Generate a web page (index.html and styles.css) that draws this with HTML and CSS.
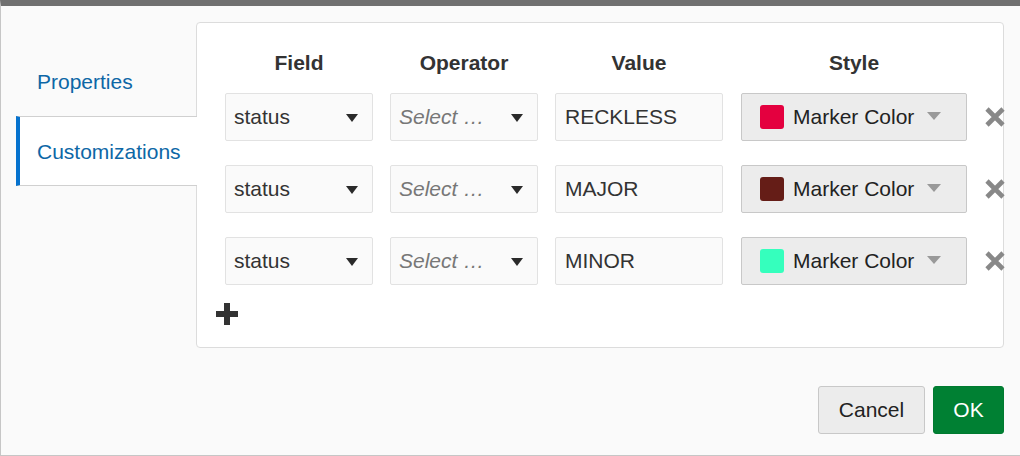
FILE: index.html
```html
<!DOCTYPE html>
<html>
<head>
<meta charset="utf-8">
<link rel="stylesheet" href="styles.css">
</head>
<body>
<div class="dialog">
  <div class="main">
    <div class="tabs">
      <div class="tab">Properties</div>
      <div class="tab active">Customizations</div>
    </div>
    <div class="panel">
      <div class="grid head">
        <div>Field</div>
        <div>Operator</div>
        <div>Value</div>
        <div>Style</div>
        <div></div>
      </div>
      <div class="grid rows">
        <div class="select"><span class="txt">status</span><span class="caret"></span></div>
        <div class="select"><span class="txt ph">Select …</span><span class="caret"></span></div>
        <div class="input">RECKLESS</div>
        <div class="style-btn"><span class="swatch sw-red"></span><span class="stxt">Marker Color</span><span class="caret gray"></span></div>
        <div class="remove"><svg width="22" height="22" viewBox="0 0 22 22"><path d="M3 3 L19 19 M19 3 L3 19" stroke="#888" stroke-width="4.6" fill="none"/></svg></div>

        <div class="select"><span class="txt">status</span><span class="caret"></span></div>
        <div class="select"><span class="txt ph">Select …</span><span class="caret"></span></div>
        <div class="input">MAJOR</div>
        <div class="style-btn"><span class="swatch sw-brown"></span><span class="stxt">Marker Color</span><span class="caret gray"></span></div>
        <div class="remove"><svg width="22" height="22" viewBox="0 0 22 22"><path d="M3 3 L19 19 M19 3 L3 19" stroke="#888" stroke-width="4.6" fill="none"/></svg></div>

        <div class="select"><span class="txt">status</span><span class="caret"></span></div>
        <div class="select"><span class="txt ph">Select …</span><span class="caret"></span></div>
        <div class="input">MINOR</div>
        <div class="style-btn"><span class="swatch sw-mint"></span><span class="stxt">Marker Color</span><span class="caret gray"></span></div>
        <div class="remove"><svg width="22" height="22" viewBox="0 0 22 22"><path d="M3 3 L19 19 M19 3 L3 19" stroke="#888" stroke-width="4.6" fill="none"/></svg></div>
      </div>
      <div class="add"><svg width="24" height="24" viewBox="0 0 24 24"><path d="M12 1 V23 M1 12 H23" stroke="#333" stroke-width="6" fill="none"/></svg></div>
    </div>
  </div>
  <div class="footer">
    <button class="btn cancel">Cancel</button>
    <button class="btn ok">OK</button>
  </div>
</div>
</body>
</html>
```
FILE: styles.css
```css
* { box-sizing: border-box; }
html, body { margin: 0; padding: 0; }
body {
  font-family: "Liberation Sans", Arial, sans-serif;
  font-size: 21px;
  color: #333;
  background: #fff;
}
.dialog {
  width: 1020px;
  height: 456px;
  background: #fafafa;
  border-top: 6px solid #707070;
  border-left: 1px solid #c6c6c6;
  border-bottom: 1px solid #c6c6c6;
  display: flex;
  flex-direction: column;
}
.main {
  display: flex;
  padding: 16px 16px 0 15px;
}
.tabs {
  width: 180px;
  flex: none;
  padding-top: 24px;
  display: flex;
  flex-direction: column;
}
.tab {
  height: 70px;
  display: flex;
  align-items: center;
  padding-left: 21px;
  padding-top: 2px;
  color: #0d67a6;
  line-height: 24px;
}
.tab.active {
  position: relative;
  z-index: 1;
  width: 181px;
  background: #fff;
  border-left: 4px solid #0572ce;
  border-top: 1px solid #d0d0d0;
  border-bottom: 1px solid #d0d0d0;
  padding-left: 17px;
}
.panel {
  flex: 1;
  min-width: 0;
  background: #fff;
  border: 1px solid #dcdcdc;
  border-radius: 4px;
  padding: 28px 0 21px 28px;
}
.grid {
  display: grid;
  grid-template-columns: 148px 148px 168px 227px 22px;
  column-gap: 17px;
}
.grid > :nth-child(5n+4) { margin-left: 1px; }
.head {
  font-weight: bold;
  text-align: center;
  line-height: 24px;
  margin-bottom: 18px;
}
.rows {
  row-gap: 24px;
  grid-auto-rows: 48px;
}
.select, .input {
  background: #fafafa;
  border: 1px solid #e2e2e2;
  border-radius: 2px;
  display: flex;
  align-items: center;
  padding: 0 14px 0 8px;
  color: #333;
}
.select .txt {
  flex: 1;
  white-space: nowrap;
  overflow: hidden;
}
.select .ph {
  font-style: italic;
  color: #777;
}
.caret {
  flex: none;
  width: 0;
  height: 0;
  border-left: 6.5px solid transparent;
  border-right: 6.5px solid transparent;
  border-top: 8px solid #2a2a2a;
  margin-top: 1px;
}
.caret.gray {
  border-left-width: 7px;
  border-right-width: 7px;
  border-top: 8px solid #999;
  margin-left: 13px;
  margin-top: -2px;
}
.input { padding-left: 9px; }
.style-btn {
  background: #ececec;
  border: 1px solid #c8c8c8;
  border-radius: 2px;
  display: flex;
  align-items: center;
  padding-left: 18px;
  color: #222;
}
.swatch {
  width: 24px;
  height: 24px;
  border-radius: 3px;
  margin-right: 9px;
  flex: none;
}
.sw-red { background: #e4003f; }
.sw-brown { background: #651d17; }
.sw-mint { background: #35ffbd; }
.stxt { white-space: nowrap; }
.remove {
  display: flex;
  align-items: center;
  justify-content: flex-start;
}
.remove svg { display: block; }
.add {
  margin-top: 17px;
  margin-left: -10px;
  height: 24px;
}
.add svg { display: block; }
.footer {
  display: flex;
  justify-content: flex-end;
  gap: 8px;
  padding: 38px 16px 0 0;
}
.btn {
  height: 48px;
  font-family: "Liberation Sans", Arial, sans-serif;
  font-size: 21px;
  border-radius: 3px;
  padding: 0;
}
.cancel {
  width: 107px;
  background: #ececec;
  border: 1px solid #c8c8c8;
  color: #222;
}
.ok {
  width: 71px;
  background: #008033;
  border: 1px solid #007a30;
  color: #fff;
}
```
